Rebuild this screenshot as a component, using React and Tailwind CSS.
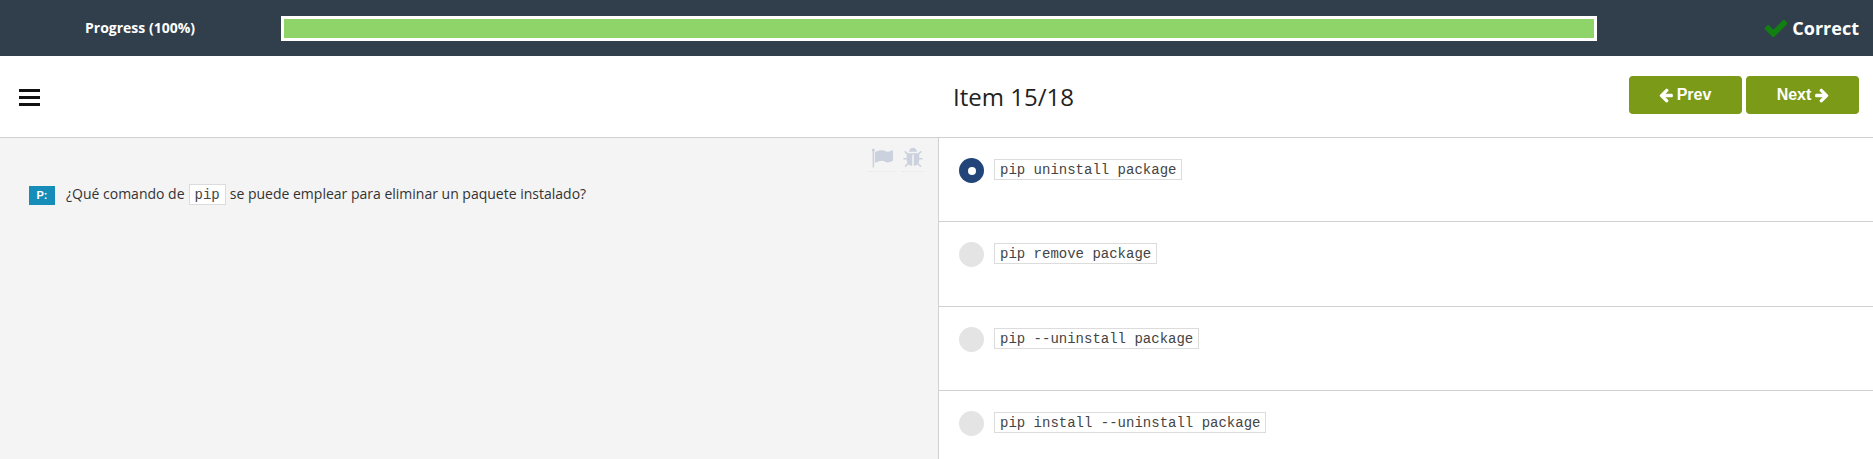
import React from "react";

function Icon({ d, className }) {
  return (
    <svg viewBox="0 0 1792 1792" fill="currentColor" className={className} aria-hidden="true">
      <path d={d} />
    </svg>
  );
}

const CHECK =
  "M1671 566q0 40-28 68l-724 724-136 136q-28 28-68 28t-68-28l-136-136-362-362q-28-28-28-68t28-68l136-136q28-28 68-28t68 28l294 295 656-657q28-28 68-28t68 28l136 136q28 28 28 68z";
const ARROW_LEFT =
  "M1664 896v128q0 53-32.5 90.5t-84.5 37.5h-704l293 294q38 36 38 90t-38 90l-75 76q-37 37-90 37-52 0-91-37l-651-652q-37-37-37-90 0-52 37-91l651-650q38-38 91-38 52 0 90 38l75 74q38 38 38 91t-38 91l-293 293h704q52 0 84.5 37.5t32.5 90.5z";
const ARROW_RIGHT =
  "M1600 960q0 54-37 91l-651 651q-39 37-91 37-51 0-90-37l-75-75q-38-38-38-91t38-91l293-293h-704q-52 0-84.5-37.5t-32.5-90.5v-128q0-53 32.5-90.5t84.5-37.5h704l-293-294q-38-36-38-90t38-90l75-75q38-38 90-38 53 0 91 38l651 651q37 35 37 90z";
const FLAG =
  "M320 256q0 72-64 110v1266q0 13-9.5 22.5t-22.5 9.5h-64q-13 0-22.5-9.5t-9.5-22.5v-1266q-64-38-64-110 0-53 37.5-90.5t90.5-37.5 90.5 37.5 37.5 90.5zm1472 64v763q0 25-12.5 38.5t-39.5 27.5q-215 116-369 116-61 0-123.5-22t-108.5-48-115.5-48-142.5-22q-192 0-464 146-17 9-33 9-26 0-45-19t-19-45v-742q0-32 31-55 21-14 79-43 236-120 421-120 107 0 200 29t219 88q38 19 88 19 54 0 117.5-21t110-47 88-47 54.5-21q26 0 45 19t19 45z";
const BUG =
  "M1696 960q0 26-19 45t-45 19h-224q0 171-67 290l208 209q19 19 19 45t-19 45q-18 19-45 19t-45-19l-198-197q-5 5-15 13t-42 28.5-65 36.5-82 29-97 13v-896h-128v896q-51 0-101.5-13.5t-87-33-66-39-43.5-32.5l-15-14-183 207q-20 21-48 21-24 0-43-16-19-18-20.5-44.5t15.5-46.5l202-227q-58-114-58-274h-224q-26 0-45-19t-19-45 19-45 45-19h224v-294l-173-173q-19-19-19-45t19-45 45-19 45 19l173 173h844l173-173q19-19 45-19t45 19 19 45-19 45l-173 173v294h224q26 0 45 19t19 45zm-480-576h-640q0-133 93.5-226.5t226.5-93.5 226.5 93.5 93.5 226.5z";

function Code({ children, className = "" }) {
  return (
    <code
      className={`inline-block h-[21px] border border-[#dcdcdc] bg-white px-[5px] font-['Liberation_Mono',monospace] text-[14px] leading-[21px] whitespace-pre text-[#444] ${className}`}
    >
      {children}
    </code>
  );
}

const OPTIONS = [
  { text: "pip uninstall package", selected: true, row: "h-[84px]" },
  { text: "pip remove package", selected: false, row: "h-[85px]" },
  { text: "pip --uninstall package", selected: false, row: "h-[84px]" },
  { text: "pip install --uninstall package", selected: false, row: "h-[84px]" },
];

function Option({ text, selected, row }) {
  return (
    <li className={`flex shrink-0 items-start border-b border-[#d0d0d0] pl-5 pt-5 ${row}`}>
      <span
        className={`flex size-[25px] items-center justify-center rounded-full ${selected ? "bg-[#234479]" : "bg-[#e4e4e4]"}`}
      >
        {selected && <span className="size-2 rounded-full bg-white" />}
      </span>
      <Code className="mt-px ml-[10px]">{text}</Code>
    </li>
  );
}

export default function App() {
  return (
    <div className="flex h-[459px] flex-col overflow-hidden bg-white font-['Open_Sans',sans-serif] text-[#222]">
      <header className="flex h-14 shrink-0 items-center bg-[#313f4d] text-white">
        <div className="w-[281px] pr-px pb-px text-center text-[14px] font-bold">Progress (100%)</div>
        <div className="h-[25px] w-[1316px] border-[3px] border-white bg-[#8fd468]" />
        <div className="flex flex-1 items-center justify-end gap-[3px] pr-[14px]">
          <Icon d={CHECK} className="size-[26px] text-[#118011]" />
          <span className="text-[18px] font-bold">Correct</span>
        </div>
      </header>

      <div className="flex h-[82px] shrink-0 border-b border-[#d0d0d0]">
        <div className="w-[953px] pt-[33px] pl-[19px]">
          <button className="flex w-[21px] flex-col gap-1" aria-label="Menu">
            <span className="h-[3px] w-full bg-[#111]" />
            <span className="h-[3px] w-full bg-[#111]" />
            <span className="h-[3px] w-full bg-[#111]" />
          </button>
        </div>
        <h1 className="flex-1 pt-[23px] text-[24px] leading-[36px]">Item 15/18</h1>
        <div className="flex gap-1 pt-5 pr-[14px] font-['Liberation_Sans',sans-serif] text-[16px] font-bold text-white">
          <button className="flex h-[38px] w-[113px] items-center justify-center gap-[3px] rounded bg-[#7b9a18] pr-[2px]">
            <Icon d={ARROW_LEFT} className="size-4" />
            Prev
          </button>
          <button className="flex h-[38px] w-[113px] items-center justify-center gap-[3px] rounded bg-[#7b9a18] pl-[2px]">
            Next
            <Icon d={ARROW_RIGHT} className="size-4" />
          </button>
        </div>
      </div>

      <main className="flex flex-1">
        <section className="w-[939px] border-r border-[#d0d0d0] bg-[#f4f4f4]">
          <div className="flex h-[34px] justify-end gap-[6px] pt-[9px] pr-[14px] text-[#cbd1dd]">
            <span className="flex w-[28px] justify-center border-b border-dotted border-[#e6e6e6]">
              <Icon d={FLAG} className="size-[22px]" />
            </span>
            <span className="flex w-[22px] justify-center border-b border-dotted border-[#e6e6e6]">
              <Icon d={BUG} className="size-[22px]" />
            </span>
          </div>
          <div className="flex pt-[11px] pl-[29px]">
            <span className="mt-[3px] flex h-[19px] w-[26px] items-center justify-center bg-[#168db8] font-['Liberation_Sans',sans-serif] text-[11px] font-semibold text-white">
              P:
            </span>
            <p className="ml-[11px] flex text-[14px] leading-[23px] text-[#333]">
              <span className="-mt-px">¿Qué comando de</span>
              <Code className="mt-px mr-1 ml-1">pip</Code>
              <span className="-mt-px">se puede emplear para eliminar un paquete instalado?</span>
            </p>
          </div>
        </section>
        <ul className="flex flex-1 flex-col">
          {OPTIONS.map((option) => (
            <Option key={option.text} {...option} />
          ))}
        </ul>
      </main>
    </div>
  );
}
